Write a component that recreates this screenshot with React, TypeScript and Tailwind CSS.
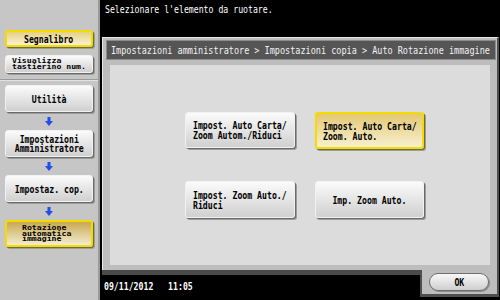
import React from "react";

const F = "font-['DejaVu_Sans_Mono','Liberation_Mono',monospace]";

const grayBtn =
  "rounded-[3px] border border-[#f2f2f2] bg-linear-to-b from-[#fbfbfb] to-[#d0d0d0] shadow-[1px_1px_0_#6a6a6a,2px_2px_0_#9c9c9c]";
const yellowBtn =
  "rounded-[3px] border-2 border-[#f4dc00] shadow-[1px_1px_0_#6a6a50,2px_2px_0_#a0a088]";

function Arrow() {
  return (
    <svg width="8" height="9" viewBox="0 0 8 9">
      <path d="M2.5 0h3v4H8L4 9 0 4h2.5z" fill="#1f4fe6" />
    </svg>
  );
}

function ArrowRow() {
  return (
    <div className="h-[18px] flex items-center justify-center">
      <Arrow />
    </div>
  );
}

export default function App() {
  return (
    <div className={`w-[500px] h-[300px] flex overflow-hidden bg-black ${F}`}>
      {/* Sidebar */}
      <div className="w-[100px] h-full shrink-0 bg-[#c6c6c6] border-r-2 border-r-[#9a9a9a] flex flex-col">
        <div className="pt-[30px] px-[5px] flex flex-col gap-[8px]">
          <div
            className={`h-[17px] ${yellowBtn} bg-linear-to-b from-[#e6d180] to-[#f8f1d4] flex items-center justify-center`}
          >
            <span className="inline-block whitespace-pre text-[10.5px] leading-[10px] font-bold text-black scale-x-[0.78]">
              Segnalibro
            </span>
          </div>
          <div className={`h-[18px] ${grayBtn} flex items-center pl-[6px]`}>
            <span className="block whitespace-pre text-[10.5px] leading-[9px] font-bold text-black scale-x-[0.78] scale-y-[0.62] origin-left">
              {"Visualizza\ntastierino num."}
            </span>
          </div>
        </div>
        <div className="mt-[6px] h-[2px] border-t border-t-[#9a9a9a] border-b border-b-[#e2e2e2]" />
        <div className="pt-[4px] px-[5px] flex flex-col">
          <div className={`h-[27px] ${grayBtn} flex items-center justify-center`}>
            <span className="inline-block whitespace-pre text-[10.5px] leading-[10px] font-bold text-black scale-x-[0.78]">
              Utilità
            </span>
          </div>
          <ArrowRow />
          <div className={`h-[27px] ${grayBtn} flex items-center justify-center`}>
            <span className="inline-block whitespace-pre text-center text-[10.5px] leading-[9px] font-bold text-black scale-x-[0.78]">
              {"Impostazioni\nAmministratore"}
            </span>
          </div>
          <ArrowRow />
          <div className={`h-[27px] ${grayBtn} flex items-center justify-center`}>
            <span className="inline-block whitespace-pre text-[10.5px] leading-[10px] font-bold text-black scale-x-[0.78]">
              Impostaz. cop.
            </span>
          </div>
          <ArrowRow />
          <div
            className={`h-[27px] ${yellowBtn} bg-linear-to-b from-[#c9a94e] to-[#f3ecd0] flex items-center pl-[15px]`}
          >
            <span className="block whitespace-pre text-[10.5px] leading-[9px] font-bold text-black scale-x-[0.78] scale-y-[0.58] origin-left">
              {"Rotazione\nautomatica\nimmagine"}
            </span>
          </div>
        </div>
      </div>

      {/* Right side */}
      <div className="w-[400px] min-w-0 shrink-0 flex flex-col overflow-hidden">
        <div className="h-[37px] pl-[5px] pt-[3px] flex items-start">
          <span className="block whitespace-pre text-[10.5px] leading-[12px] text-white scale-x-[0.78] origin-left">
            Selezionare l'elemento da ruotare.
          </span>
        </div>

        <div className="w-[397px] ml-[2px] flex flex-col">
          {/* frame */}
          <div className="h-[233px] bg-[#bdbdbd] border-l border-t border-[#e8e8e8] border-r-2 border-r-[#4e4e4e] flex flex-col">
            <div className="mt-[2px] ml-[3px] mr-[1px] h-[20px] min-w-0 overflow-hidden bg-[#555555] border border-[#8c8c8c] flex items-center pl-[4px]">
              <span className="block whitespace-pre text-[10.5px] leading-[12px] text-[#f2f2f2] scale-x-[0.81] origin-left">
                {"Impostazioni amministratore > Impostazioni copia > Auto Rotazione immagine"}
              </span>
            </div>
            <div className="mt-[5px] ml-[7px] mr-[7px] h-[200px] bg-[#dcdcdc] pl-[75px] pt-[47px]">
              <div className="grid grid-cols-[110px_109px] gap-x-[20px] gap-y-[32px]">
                <div className={`h-[36px] ${grayBtn} flex items-center pl-[7px]`}>
                  <span className="block whitespace-pre text-[10.5px] leading-[10px] font-bold text-black scale-x-[0.78] origin-left">
                    {"Impost. Auto Carta/\nZoom Autom./Riduci"}
                  </span>
                </div>
                <div
                  className={`h-[37px] ${yellowBtn} bg-linear-to-b from-[#e4c973] to-[#f7efcf] flex items-center pl-[6px]`}
                >
                  <span className="block whitespace-pre text-[10.5px] leading-[10px] font-bold text-black scale-x-[0.78] origin-left">
                    {"Impost. Auto Carta/\nZoom. Auto."}
                  </span>
                </div>
                <div className={`h-[37px] ${grayBtn} flex items-center pl-[7px]`}>
                  <span className="block whitespace-pre text-[10.5px] leading-[10px] font-bold text-black scale-x-[0.78] origin-left">
                    {"Impost. Zoom Auto./\nRiduci"}
                  </span>
                </div>
                <div className={`h-[37px] ${grayBtn} flex items-center justify-center`}>
                  <span className="inline-block whitespace-pre text-[10.5px] leading-[10px] font-bold text-black scale-x-[0.78]">
                    Imp. Zoom Auto.
                  </span>
                </div>
              </div>
            </div>
          </div>

          {/* bottom row */}
          <div className="h-[30px] flex">
            <div className="flex-1 min-w-0 flex flex-col">
              <div className="h-[5px] bg-[#4a4a4a]" />
              <div className="pl-[2px] pt-[5px] flex items-start">
                <span className="block whitespace-pre text-[10.5px] leading-[12px] font-bold text-white scale-x-[0.78] origin-left">
                  {"09/11/2012   11:05"}
                </span>
              </div>
            </div>
            <div className="w-[79px] shrink-0 h-[27px] bg-[#bdbdbd] border-l-2 border-l-[#4e4e4e] border-r-2 border-r-[#4e4e4e] border-b-[3px] border-b-[#4e4e4e] pl-[7px] pt-[3px]">
              <div className="w-[60px] h-[18px] rounded-full border border-[#6e6e6e] bg-linear-to-b from-[#f8f8f8] to-[#cfcfcf] shadow-[1px_1px_0_#8a8a8a] flex items-center justify-center">
                <span className="inline-block text-[10.5px] leading-[10px] font-bold text-black scale-x-[0.78]">
                  OK
                </span>
              </div>
            </div>
          </div>
        </div>
      </div>
    </div>
  );
}
